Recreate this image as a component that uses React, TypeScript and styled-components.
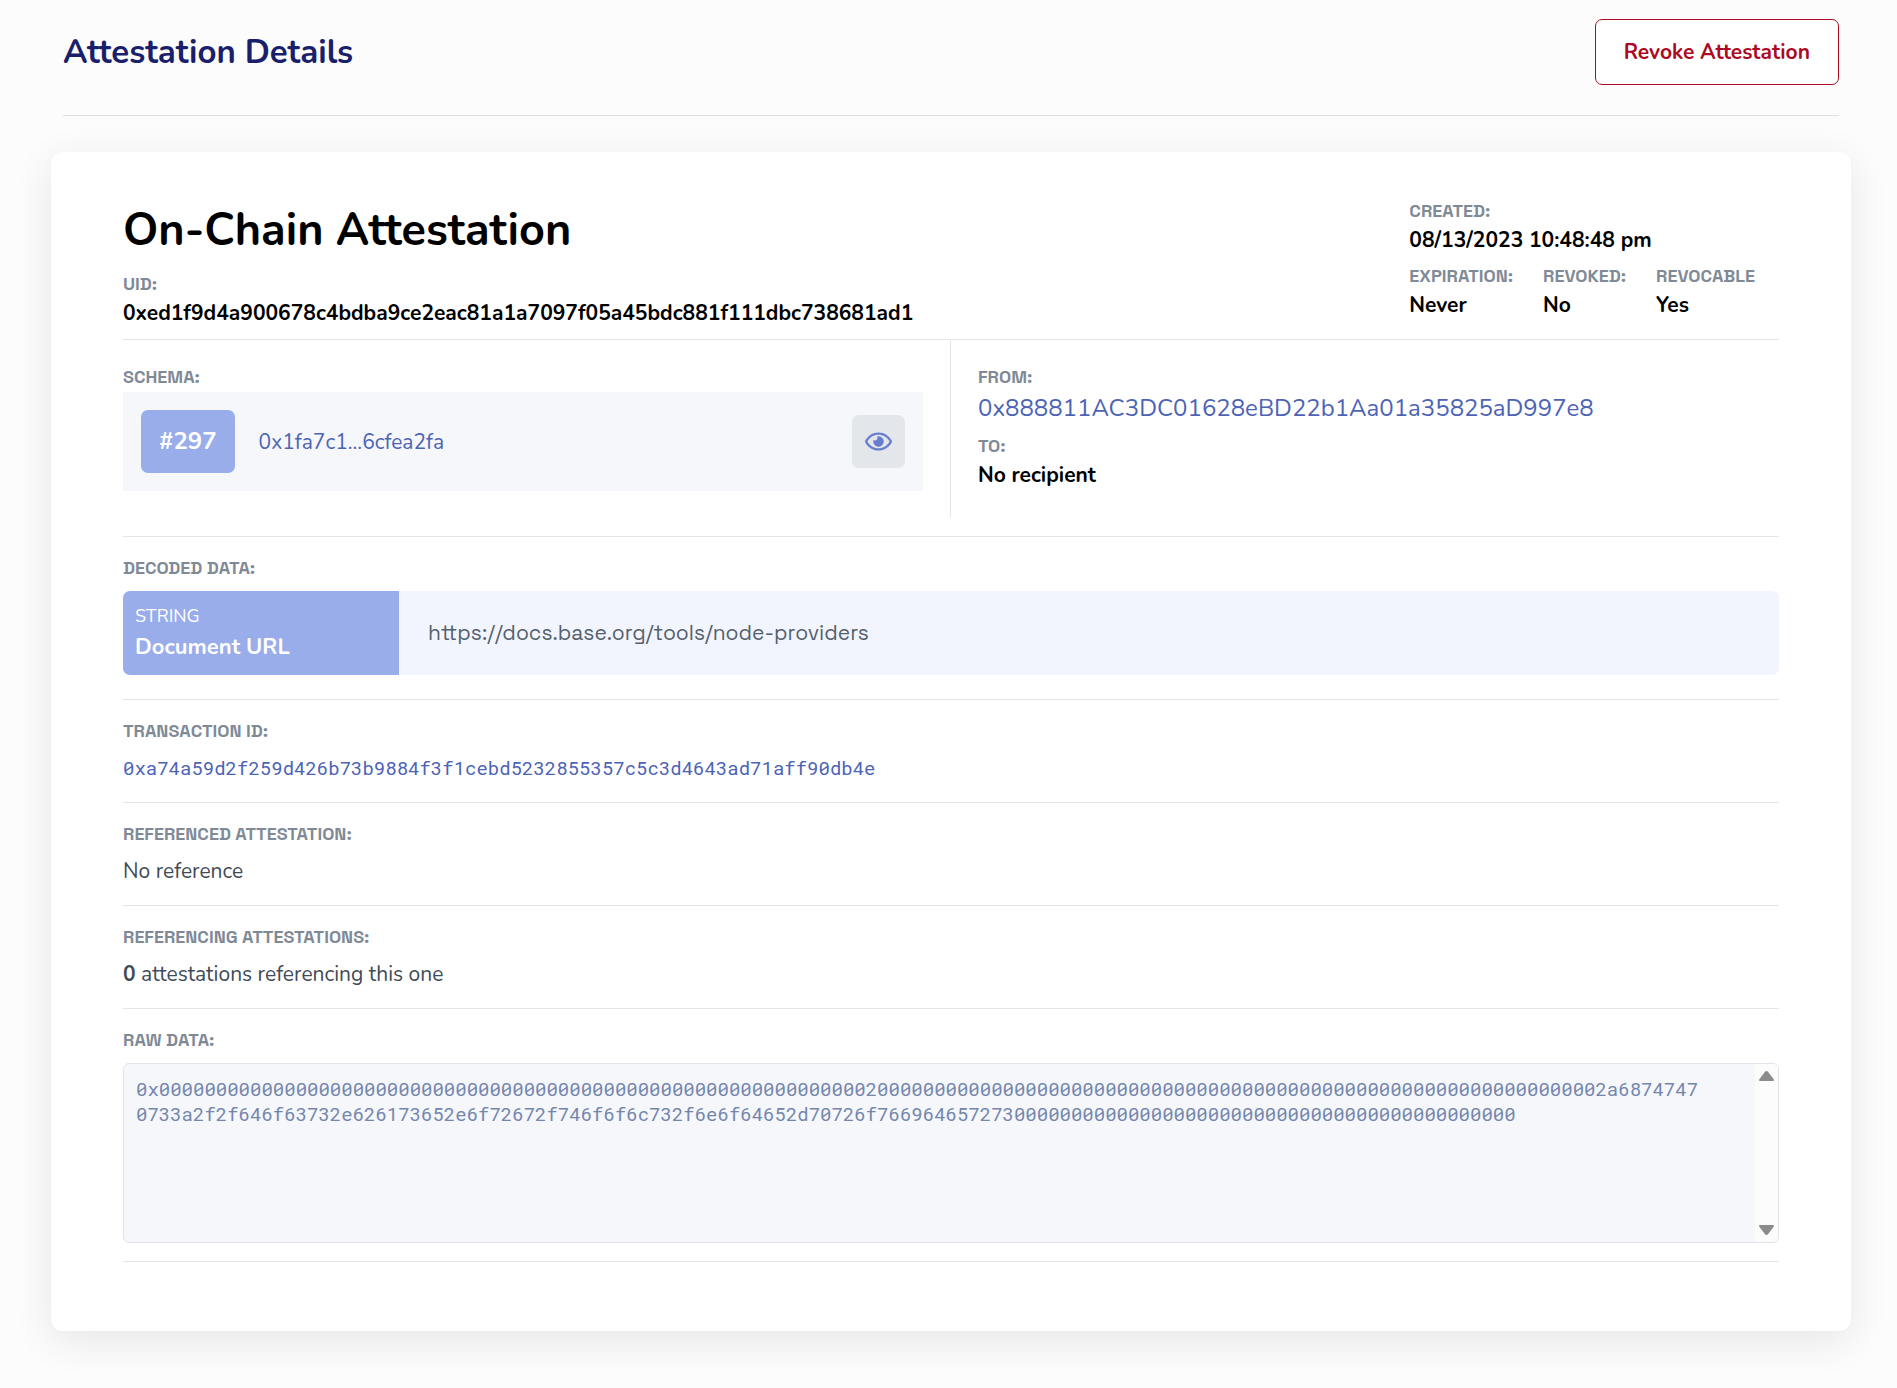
import React, { useRef } from "react";
import styled, { createGlobalStyle } from "styled-components";
import { FaRegEye } from "react-icons/fa";

const sans = `"Nunito", "Lato", "Noto Sans", sans-serif`;
const grotesk = `"Space Grotesk", "Inter", "Liberation Sans", sans-serif`;
const mono = `"Roboto Mono", "DejaVu Sans Mono", "Liberation Mono", monospace`;

const color = {
  page: "#fcfcfc",
  rule: "#e4e6ea",
  label: "#7f8a96",
  link: "#4c63b6",
  badge: "#98adea",
  panel: "#f5f7fb",
};

const GlobalStyle = createGlobalStyle`
  *, *::before, *::after { box-sizing: border-box; }
  body {
    margin: 0;
    background: ${color.page};
    color: #000;
    font-family: ${sans};
    font-size: 21px;
    line-height: 28px;
  }
  h1, h2, dl, dd, p { margin: 0; }
`;

const Page = styled.main`
  padding: 0 46px 56px 51px;
`;

const PageHeader = styled.header`
  display: flex;
  align-items: center;
  justify-content: space-between;
  margin: 0 12px 36px;
  padding: 19px 0 30px;
  border-bottom: 1px solid #dfe0e2;
`;

const PageTitle = styled.h1`
  color: #1a1f6c;
  font-size: 33px;
  line-height: 45px;
  font-weight: 700;
`;

const RevokeButton = styled.button`
  padding: 18px 28px;
  border: 1px solid #ab0a22;
  border-radius: 7px;
  background: #fff;
  color: #ab0a22;
  font: 700 21px/28px ${sans};
  cursor: pointer;
`;

const Card = styled.article`
  padding: 47px 72px 69px;
  border-radius: 12px;
  background: #fff;
  box-shadow: 0 10px 40px rgba(0, 0, 0, 0.09);
`;

const Summary = styled.header`
  display: flex;
  justify-content: space-between;
  align-items: flex-start;
  padding-bottom: 12px;
  border-bottom: 1px solid ${color.rule};
`;

const CardTitle = styled.h2`
  padding: 2px 0 11px;
  font-size: 45px;
  line-height: 60px;
  font-weight: 700;
`;

const Fields = styled.dl`
  display: flex;
  flex-direction: column;
  gap: 10px;
`;

const FieldRow = styled.dl`
  display: flex;
  gap: 30px;
`;

const Field = styled.div`
  display: flex;
  flex-direction: column;
  gap: 3px;
`;

const Dates = styled.div`
  display: flex;
  flex-direction: column;
  gap: 10px;
  padding-right: 24px;
`;

const Label = styled.dt`
  display: block;
  color: ${color.label};
  font: 700 18px/24px ${grotesk};
  text-transform: uppercase;
`;

const Value = styled.dd`
  font-weight: 700;
`;

const Parties = styled.div`
  display: grid;
  grid-template-columns: 1fr 1fr;
  padding-bottom: 18px;
  border-bottom: 1px solid ${color.rule};
`;

const Party = styled.div`
  padding: 25px 0 27px 27px;

  &:first-child {
    padding: 25px 27px 27px 0;
    border-right: 1px solid ${color.rule};
  }
`;

const SchemaBox = styled.dd`
  display: flex;
  align-items: center;
  gap: 24px;
  padding: 18px;
  background: ${color.panel};
`;

const SchemaNumber = styled.span`
  padding: 15px 18px;
  border-radius: 7px;
  background: ${color.badge};
  color: #fff;
  font-size: 24px;
  line-height: 33px;
  font-weight: 700;
`;

const TextLink = styled.a<{ $large?: boolean }>`
  color: ${color.link};
  font-size: ${(p) => (p.$large ? "24px" : "21px")};
  line-height: ${(p) => (p.$large ? "32px" : "28px")};
  font-weight: 400;
  text-decoration: none;
`;

const FromLink = styled(TextLink)`
  display: block;
`;

const HashLink = styled(TextLink)`
  display: block;
  font-family: ${mono};
  font-size: 19px;
`;

const EyeButton = styled.button`
  display: flex;
  align-items: center;
  justify-content: center;
  width: 53px;
  height: 53px;
  margin-left: auto;
  padding: 0;
  border: 0;
  border-radius: 7px;
  background: #e3e7eb;
  color: #667dd0;
  font-size: 27px;
  cursor: pointer;
`;

const Section = styled.section<{ $bottom?: number }>`
  display: flex;
  flex-direction: column;
  gap: 11px;
  padding: 19px 0 ${(p) => p.$bottom ?? 20}px;
  border-bottom: 1px solid ${color.rule};
`;

const Note = styled.p`
  color: #3f4b57;
`;

const Decoded = styled.dl`
  display: grid;
  grid-template-columns: 1fr 5fr;
  min-height: 84px;
  border-radius: 7px;
  background: #f2f5fe;
  overflow: hidden;
`;

const DecodedName = styled.dt`
  display: flex;
  flex-direction: column;
  justify-content: center;
  gap: 4px;
  padding: 0 12px;
  background: ${color.badge};
  color: #fff;
  font-size: 22px;
  line-height: 30px;
  font-weight: 700;
`;

const DecodedType = styled.span`
  font-size: 18px;
  line-height: 24px;
  font-weight: 400;
`;

const DecodedValue = styled.dd`
  display: flex;
  align-items: center;
  padding: 0 29px;
  color: #54606c;
  font-family: ${grotesk};
`;

const RawBox = styled.div`
  display: flex;
  height: 180px;
  border: 1px solid #e1e4ea;
  border-radius: 6px;
  background: ${color.panel};
  overflow: hidden;
`;

const RawText = styled.textarea`
  flex: 1;
  min-width: 0;
  padding: 12px 52px 12px 12px;
  border: 0;
  outline: 0;
  resize: none;
  background: transparent;
  color: #7486ad;
  font: 400 19px/25px ${mono};
  word-break: break-all;
  scrollbar-width: none;
`;

const Track = styled.div`
  display: flex;
  flex-direction: column;
  justify-content: space-between;
  width: 23px;
  padding: 7px 0;
  background: ${color.page};
`;

const ArrowButton = styled.button`
  display: flex;
  justify-content: center;
  padding: 0;
  border: 0;
  background: none;
  color: #8b8b8b;
`;

const UID = "0xed1f9d4a900678c4bdba9ce2eac81a1a7097f05a45bdc881f111dbc738681ad1";
const TX = "0xa74a59d2f259d426b73b9884f3f1cebd5232855357c5c3d4643ad71aff90db4e";
const DOC_URL = "https://docs.base.org/tools/node-providers";

// ABI encoding of one dynamic string: offset, length, then the padded bytes.
function encodeString(text: string): string {
  const word = (n: number) => n.toString(16).padStart(64, "0");
  const bytes = Array.from(text, (c) => c.charCodeAt(0).toString(16)).join("");
  const padded = bytes.padEnd(Math.ceil(bytes.length / 64) * 64, "0");
  return "0x" + word(32) + word(text.length) + padded;
}

function Arrow({ down }: { down?: boolean }) {
  return (
    <svg width="15" height="10" viewBox="0 0 15 10" fill="currentColor" aria-hidden="true">
      {down ? (
        <path d="M1.2 0h12.6c1 0 1.5 1 .9 1.8L9 9.2C8.2 10.2 6.8 10.2 6 9.2L.3 1.8C-.3 1 .2 0 1.2 0z" />
      ) : (
        <path d="M1.2 10h12.6c1 0 1.5-1 .9-1.8L9 .8C8.2-.2 6.8-.2 6 .8L.3 8.2C-.3 9 .2 10 1.2 10z" />
      )}
    </svg>
  );
}

function LabelledField({ label, children }: { label: string; children: React.ReactNode }) {
  return (
    <Field>
      <Label>{label}</Label>
      <Value>{children}</Value>
    </Field>
  );
}

export default function App() {
  const raw = useRef<HTMLTextAreaElement>(null);
  const scroll = (by: number) => raw.current?.scrollBy({ top: by });

  return (
    <>
      <GlobalStyle />
      <Page>
        <PageHeader>
          <PageTitle>Attestation Details</PageTitle>
          <RevokeButton type="button">Revoke Attestation</RevokeButton>
        </PageHeader>

        <Card>
          <Summary>
            <div>
              <CardTitle>On-Chain Attestation</CardTitle>
              <Fields>
                <LabelledField label="UID:">{UID}</LabelledField>
              </Fields>
            </div>
            <Dates>
              <Fields>
                <LabelledField label="Created:">08/13/2023 10:48:48 pm</LabelledField>
              </Fields>
              <FieldRow>
                <LabelledField label="Expiration:">Never</LabelledField>
                <LabelledField label="Revoked:">No</LabelledField>
                <LabelledField label="Revocable">Yes</LabelledField>
              </FieldRow>
            </Dates>
          </Summary>

          <Parties>
            <Party>
              <Fields>
                <Field>
                  <Label>Schema:</Label>
                  <SchemaBox>
                    <SchemaNumber>#297</SchemaNumber>
                    <TextLink href="#schema">0x1fa7c1...6cfea2fa</TextLink>
                    <EyeButton type="button" aria-label="View schema">
                      <FaRegEye />
                    </EyeButton>
                  </SchemaBox>
                </Field>
              </Fields>
            </Party>
            <Party>
              <Fields>
                <LabelledField label="From:">
                  <FromLink $large href="#from">0x888811AC3DC01628eBD22b1Aa01a35825aD997e8</FromLink>
                </LabelledField>
                <LabelledField label="To:">No recipient</LabelledField>
              </Fields>
            </Party>
          </Parties>

          <Section $bottom={24}>
            <Label as="div">Decoded Data:</Label>
            <Decoded>
              <DecodedName>
                <DecodedType>STRING</DecodedType>
                Document URL
              </DecodedName>
              <DecodedValue>{DOC_URL}</DecodedValue>
            </Decoded>
          </Section>

          <Section>
            <Label as="div">Transaction ID:</Label>
            <HashLink href="#tx">{TX}</HashLink>
          </Section>

          <Section>
            <Label as="div">Referenced Attestation:</Label>
            <Note>No reference</Note>
          </Section>

          <Section>
            <Label as="div">Referencing Attestations:</Label>
            <Note>
              <b>0</b> attestations referencing this one
            </Note>
          </Section>

          <Section $bottom={18}>
            <Label as="label" htmlFor="raw-data">Raw Data:</Label>
            <RawBox>
              <RawText id="raw-data" ref={raw} readOnly value={encodeString(DOC_URL)} />
              <Track>
                <ArrowButton type="button" aria-label="Scroll up" onClick={() => scroll(-25)}>
                  <Arrow />
                </ArrowButton>
                <ArrowButton type="button" aria-label="Scroll down" onClick={() => scroll(25)}>
                  <Arrow down />
                </ArrowButton>
              </Track>
            </RawBox>
          </Section>
        </Card>
      </Page>
    </>
  );
}
